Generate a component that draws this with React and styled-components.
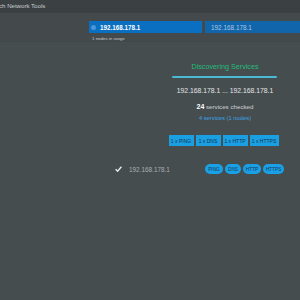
import React from "react";
import styled, { createGlobalStyle } from "styled-components";

const Global = createGlobalStyle`
  html, body { margin: 0; padding: 0; background: #464d4f; }
  body { font-family: "Liberation Sans", Arial, sans-serif; overflow: hidden; }
`;

const Page = styled.div`
  width: 300px;
  height: 300px;
  background: #464d4f;
  overflow: hidden;
  display: flex;
  flex-direction: column;
`;

const TitleBar = styled.div`
  height: 13px;
  background: #3b4043;
  color: #c8ccce;
  font-size: 6.1px;
  line-height: 12px;
  white-space: nowrap;
  text-indent: -1px;
`;

const Toolbar = styled.div`
  height: 29px;
  background: #44494c;
  border-bottom: 1px solid #41474a;
  display: flex;
  padding: 8px 0 0 89px;
  box-sizing: border-box;
  gap: 3px;
`;

const Field = styled.div`
  display: flex;
  flex-direction: column;
  flex: ${(p) => (p.$grow ? "1" : "none")};
`;

const InputBox = styled.div`
  height: 12px;
  width: ${(p) => (p.$w ? p.$w + "px" : "auto")};
  background: ${(p) => (p.$active ? "#0b6fc1" : "#1165aa")};
  color: ${(p) => (p.$active ? "#ffffff" : "#a9c6e2")};
  font-size: ${(p) => (p.$active ? "6.3px" : "6.4px")};
  font-weight: ${(p) => (p.$active ? "bold" : "normal")};
  display: flex;
  align-items: center;
  gap: 4px;
  padding-left: ${(p) => (p.$active ? "2px" : "6px")};
  box-sizing: border-box;
  white-space: nowrap;
`;

const Dot = styled.span`
  width: 5px;
  height: 5px;
  border-radius: 50%;
  background: #4a96d8;
  flex: none;
`;

const Hint = styled.div`
  font-size: 4.4px;
  color: #c9ced1;
  padding: 3px 0 0 3px;
  white-space: nowrap;
`;

const Main = styled.div`
  display: flex;
  flex-direction: column;
`;

const Panel = styled.div`
  margin-left: 150px;
  width: 150px;
  display: flex;
  flex-direction: column;
  align-items: center;
  padding-top: 20px;
`;

const PanelTitle = styled.div`
  color: #1fbd7c;
  font-size: 7.2px;
  line-height: 9px;
  white-space: nowrap;
`;

const Progress = styled.div`
  width: 105px;
  height: 2px;
  margin-top: 5px;
  margin-left: -1px;
  background: #49b9d6;
  border-radius: 1px;
`;

const Range = styled.div`
  margin-top: 8px;
  color: #e2e5e6;
  font-size: 6.8px;
  line-height: 9px;
  white-space: nowrap;
`;

const Checked = styled.div`
  margin-top: 7px;
  color: #cfd3d5;
  font-size: 6.2px;
  line-height: 9px;
  white-space: nowrap;
  & b { color: #ffffff; font-size: 7px; }
`;

const Found = styled.div`
  margin-top: 3px;
  color: #3aa3e6;
  font-size: 5.8px;
  line-height: 9px;
  white-space: nowrap;
`;

const ButtonRow = styled.div`
  display: flex;
  gap: 2px;
  margin-top: 12px;
  margin-left: -3px;
`;

const CountButton = styled.div`
  height: 11px;
  width: ${(p) => p.$w}px;
  box-sizing: border-box;
  background: #1b9fe3;
  color: #13344d;
  font-size: 5px;
  display: flex;
  align-items: center;
  justify-content: center;
  white-space: nowrap;
`;

const ResultRow = styled.div`
  display: flex;
  align-items: center;
  margin-top: 18px;
  padding-left: 115px;
  height: 10px;
`;

const Check = styled.svg`
  width: 7px;
  height: 6px;
  flex: none;
`;

const NodeIp = styled.div`
  margin-left: 7px;
  color: #a9afb2;
  font-size: 6.4px;
  white-space: nowrap;
  width: 76px;
`;

const Badges = styled.div`
  display: flex;
  gap: 2px;
`;

const Badge = styled.div`
  height: 10px;
  width: ${(p) => p.$w}px;
  border-radius: 5px;
  background: #1aa0e6;
  color: #163a55;
  font-size: 4.8px;
  display: flex;
  align-items: center;
  justify-content: center;
`;

export default function App() {
  const counts = [
    ["1 x PING", 25],
    ["1 x DNS", 25],
    ["1 x HTTP", 25],
    ["1 x HTTPS", 29],
  ];
  const badges = [
    ["PING", 18],
    ["DNS", 16],
    ["HTTP", 18],
    ["HTTPS", 21],
  ];
  return (
    <Page>
      <Global />
      <TitleBar>ch Network Tools</TitleBar>
      <Toolbar>
        <Field>
          <InputBox $active $w={113}>
            <Dot />
            192.168.178.1
          </InputBox>
          <Hint>1 nodes in range</Hint>
        </Field>
        <Field $grow>
          <InputBox>192.168.178.1</InputBox>
        </Field>
      </Toolbar>
      <Main>
        <Panel>
          <PanelTitle>Discovering Services</PanelTitle>
          <Progress />
          <Range>192.168.178.1 ... 192.168.178.1</Range>
          <Checked>
            <b>24</b> services checked
          </Checked>
          <Found>4 services (1 nodes)</Found>
          <ButtonRow>
            {counts.map(([t, w]) => (
              <CountButton key={t} $w={w}>
                {t}
              </CountButton>
            ))}
          </ButtonRow>
        </Panel>
        <ResultRow>
          <Check viewBox="0 0 7 6">
            <path d="M0.6 3.2 L2.6 5.2 L6.4 0.8" fill="none" stroke="#e8ebec" strokeWidth="1.4" />
          </Check>
          <NodeIp>192.168.178.1</NodeIp>
          <Badges>
            {badges.map(([t, w]) => (
              <Badge key={t} $w={w}>
                {t}
              </Badge>
            ))}
          </Badges>
        </ResultRow>
      </Main>
    </Page>
  );
}
